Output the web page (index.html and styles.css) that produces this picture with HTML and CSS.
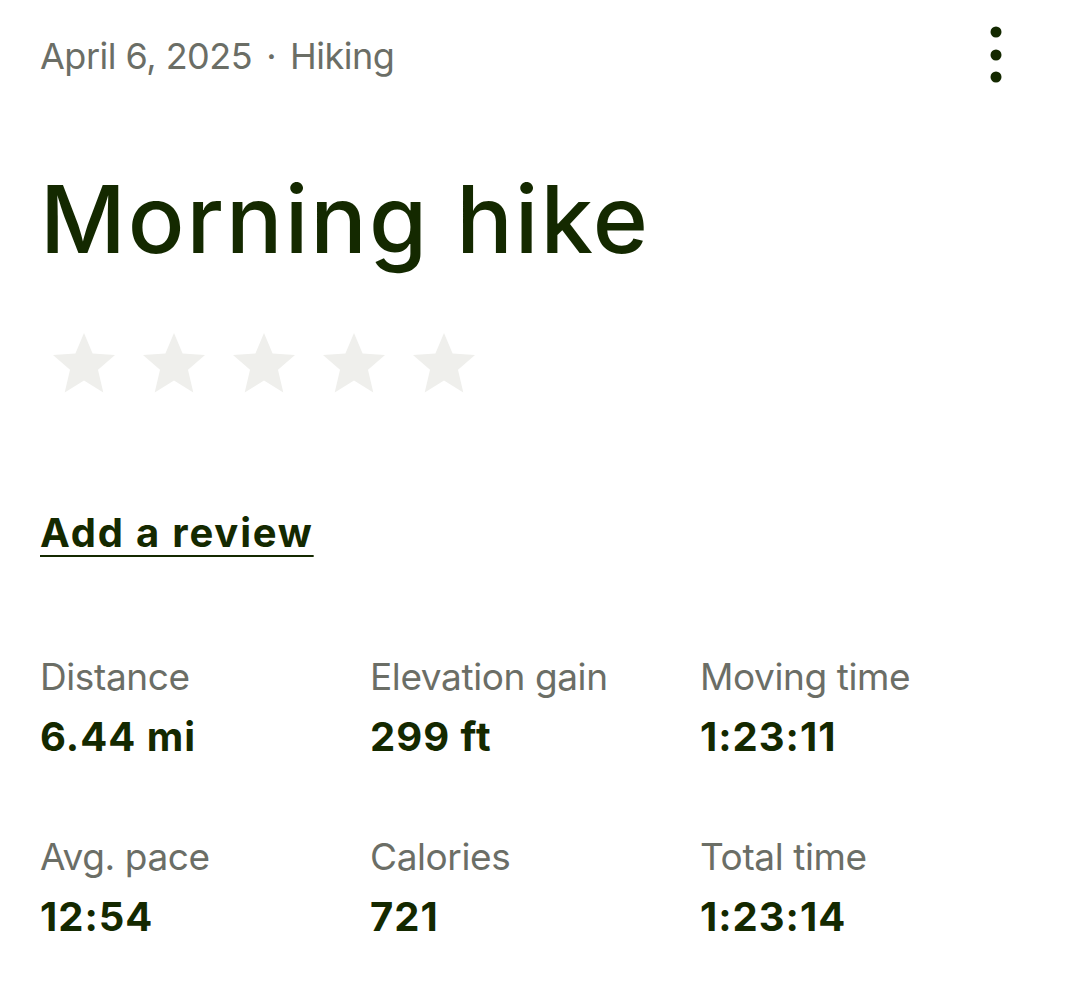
FILE: index.html
```html
<!DOCTYPE html>
<html lang="en">
<head>
<meta charset="utf-8">
<title>Morning hike</title>
<link rel="stylesheet" href="styles.css">
</head>
<body>
<main class="page">
  <header class="meta-row">
    <p class="meta"><span>April 6, 2025</span><span class="sep">·</span><span>Hiking</span></p>
    <button class="more" aria-label="More options">
      <svg width="24" height="60" viewBox="0 0 24 60" aria-hidden="true">
        <circle cx="12" cy="8" r="5.5" fill="currentColor"/>
        <circle cx="12" cy="31" r="5.5" fill="currentColor"/>
        <circle cx="12" cy="53" r="5.5" fill="currentColor"/>
      </svg>
    </button>
  </header>

  <h1 class="title">Morning hike</h1>

  <div class="stars" aria-label="Rating: 0 of 5">
    <svg class="star" viewBox="0 0 64 62"><path d="M32 0 L40.6 20.4 L63 22 L46 36.8 L51.3 59.5 L32 47.6 L12.7 59.5 L18 36.8 L1 22 L23.4 20.4 Z"/></svg>
    <svg class="star" viewBox="0 0 64 62"><path d="M32 0 L40.6 20.4 L63 22 L46 36.8 L51.3 59.5 L32 47.6 L12.7 59.5 L18 36.8 L1 22 L23.4 20.4 Z"/></svg>
    <svg class="star" viewBox="0 0 64 62"><path d="M32 0 L40.6 20.4 L63 22 L46 36.8 L51.3 59.5 L32 47.6 L12.7 59.5 L18 36.8 L1 22 L23.4 20.4 Z"/></svg>
    <svg class="star" viewBox="0 0 64 62"><path d="M32 0 L40.6 20.4 L63 22 L46 36.8 L51.3 59.5 L32 47.6 L12.7 59.5 L18 36.8 L1 22 L23.4 20.4 Z"/></svg>
    <svg class="star" viewBox="0 0 64 62"><path d="M32 0 L40.6 20.4 L63 22 L46 36.8 L51.3 59.5 L32 47.6 L12.7 59.5 L18 36.8 L1 22 L23.4 20.4 Z"/></svg>
  </div>

  <a class="review" href="#">Add a review</a>

  <section class="stats">
    <div class="stat"><div class="label">Distance</div><div class="value">6.44 mi</div></div>
    <div class="stat"><div class="label">Elevation gain</div><div class="value">299 ft</div></div>
    <div class="stat"><div class="label">Moving time</div><div class="value">1:23:11</div></div>
    <div class="stat"><div class="label">Avg. pace</div><div class="value">12:54</div></div>
    <div class="stat"><div class="label">Calories</div><div class="value">721</div></div>
    <div class="stat"><div class="label">Total time</div><div class="value">1:23:14</div></div>
  </section>
</main>
</body>
</html>
```

FILE: styles.css
```css
* { box-sizing: border-box; }
html, body { margin: 0; background: #ffffff; }
body {
  font-family: Inter, "Noto Sans", sans-serif;
  color: #142900;
}
.page {
  padding: 24px 40px 40px 40px;
}
.meta-row {
  display: flex;
  justify-content: space-between;
  align-items: flex-start;
}
.meta {
  margin: 0;
  font-size: 36px;
  line-height: 64px;
  color: #6b6e66;
  letter-spacing: -0.5px;
}
.sep { margin: 0 14px; }
.more {
  border: 0;
  background: none;
  padding: 0;
  margin: 0 22px 0 0;
  color: #142900;
  line-height: 0;
}
.title {
  margin: 75px 0 0 0;
  font-size: 94px;
  line-height: 112px;
  font-weight: 500;
  letter-spacing: 2px;
}
.stars {
  display: flex;
  gap: 26px;
  margin: 58px 0 0 12px;
}
.star {
  width: 64px;
  height: 62px;
  fill: #efefec;
}
.review {
  display: inline-block;
  margin-top: 114px;
  font-size: 40px;
  line-height: 48px;
  font-weight: 700;
  color: #142900;
  text-decoration: underline;
  text-decoration-thickness: 2px;
  text-underline-offset: 8px;
  letter-spacing: 1.8px;
}
.stats {
  display: grid;
  grid-template-columns: repeat(3, 330px);
  row-gap: 70px;
  margin-top: 96px;
}
.label {
  font-size: 37px;
  line-height: 48px;
  color: #6b6e66;
  letter-spacing: -0.4px;
}
.value {
  margin-top: 10px;
  font-size: 40px;
  line-height: 52px;
  font-weight: 700;
  letter-spacing: 1px;
}
```
